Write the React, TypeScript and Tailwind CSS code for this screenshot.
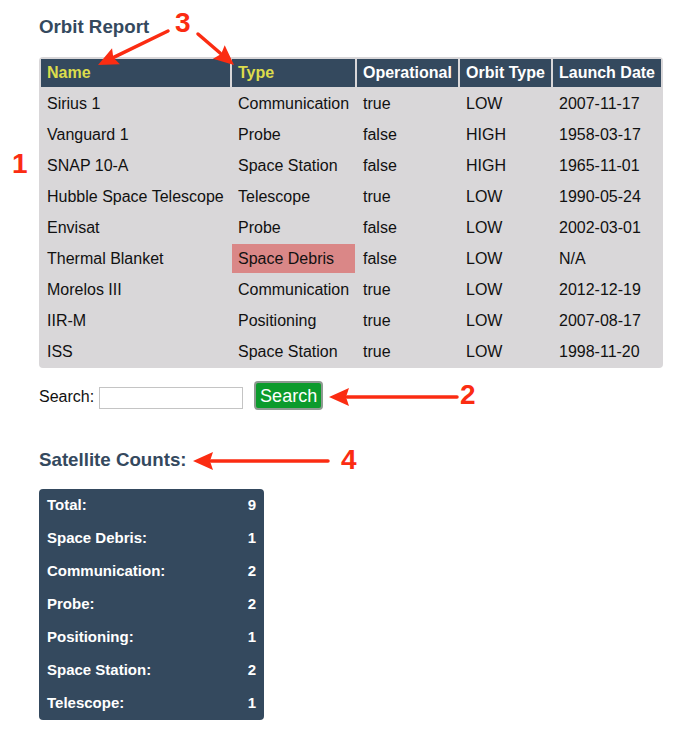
import React from "react";

const RED = "#fb2c12";

type Row = { name: string; type: string; op: string; orbit: string; date: string; hl?: boolean };

const rows: Row[] = [
  { name: "Sirius 1", type: "Communication", op: "true", orbit: "LOW", date: "2007-11-17" },
  { name: "Vanguard 1", type: "Probe", op: "false", orbit: "HIGH", date: "1958-03-17" },
  { name: "SNAP 10-A", type: "Space Station", op: "false", orbit: "HIGH", date: "1965-11-01" },
  { name: "Hubble Space Telescope", type: "Telescope", op: "true", orbit: "LOW", date: "1990-05-24" },
  { name: "Envisat", type: "Probe", op: "false", orbit: "LOW", date: "2002-03-01" },
  { name: "Thermal Blanket", type: "Space Debris", op: "false", orbit: "LOW", date: "N/A", hl: true },
  { name: "Morelos III", type: "Communication", op: "true", orbit: "LOW", date: "2012-12-19" },
  { name: "IIR-M", type: "Positioning", op: "true", orbit: "LOW", date: "2007-08-17" },
  { name: "ISS", type: "Space Station", op: "true", orbit: "LOW", date: "1998-11-20" },
];

const counts: [string, number][] = [
  ["Total:", 9],
  ["Space Debris:", 1],
  ["Communication:", 2],
  ["Probe:", 2],
  ["Positioning:", 1],
  ["Space Station:", 2],
  ["Telescope:", 1],
];

function Arrow({ x1, y1, x2, y2 }: { x1: number; y1: number; x2: number; y2: number }) {
  const dx = x2 - x1;
  const dy = y2 - y1;
  const len = Math.hypot(dx, dy);
  const ux = dx / len;
  const uy = dy / len;
  const hl = 20;
  const hw = 9;
  const bx = x2 - ux * hl;
  const by = y2 - uy * hl;
  const px = -uy;
  const py = ux;
  const pts = `${x2},${y2} ${bx + px * hw},${by + py * hw} ${bx + ux * 3},${by + uy * 3} ${bx - px * hw},${by - py * hw}`;
  return (
    <g>
      <line x1={x1} y1={y1} x2={bx + ux * 2} y2={by + uy * 2} stroke={RED} strokeWidth={3.5} strokeLinecap="round" />
      <polygon points={pts} fill={RED} />
    </g>
  );
}

function Num({ children, className }: { children: React.ReactNode; className: string }) {
  return (
    <div
      className={`absolute text-[28px] font-bold leading-[28px] text-[#fb2c12] ${className}`}
      style={{ fontFamily: '"Liberation Sans", Arial, sans-serif' }}
    >
      {children}
    </div>
  );
}

export default function App() {
  return (
    <div
      className="relative w-[676px] h-[737px] bg-white overflow-hidden"
      style={{ fontFamily: '"Liberation Sans", Arial, Helvetica, sans-serif' }}
    >
      <div className="pl-[39px] flex flex-col">
        <div className="mt-[16px] h-[22px] text-[18.72px] leading-[22px] font-bold text-[#34495e]">Orbit Report</div>

        <table className="mt-[19px] w-[624px] table-fixed border-separate border-spacing-[2px] bg-[#d9d7d9] rounded-[4px] text-[16px] text-[#111]">
          <thead>
            <tr className="h-[28px]">
              <th className="w-[189px] bg-[#34495e] text-left px-[6px] py-0 font-bold text-[#dcdc4c]">Name</th>
              <th className="w-[123px] bg-[#34495e] text-left px-[6px] py-0 font-bold text-[#dcdc4c]">Type</th>
              <th className="w-[101px] bg-[#34495e] text-left px-[6px] py-0 font-bold text-white">Operational</th>
              <th className="w-[91px] bg-[#34495e] text-left px-[6px] py-0 font-bold text-white">Orbit Type</th>
              <th className="w-[108px] bg-[#34495e] text-left px-[6px] py-0 font-bold text-white">Launch Date</th>
            </tr>
          </thead>
          <tbody>
            {rows.map((r) => (
              <tr key={r.name} className="h-[29px]">
                <td className="px-[6px] py-0 whitespace-nowrap">{r.name}</td>
                <td className={`px-[6px] py-0 whitespace-nowrap ${r.hl ? "bg-[#da8787]" : ""}`}>{r.type}</td>
                <td className="px-[6px] py-0">{r.op}</td>
                <td className="px-[6px] py-0">{r.orbit}</td>
                <td className="px-[6px] py-0">{r.date}</td>
              </tr>
            ))}
          </tbody>
        </table>

        <div className="mt-[13px] h-[29px] flex items-center text-[16px] text-[#111]">
          <span className="mt-[3px]">Search:</span>
          <input
            type="text"
            className="ml-[5px] w-[144px] h-[22px] mt-[4px] border border-[#c4c4c4] bg-white outline-none"
          />
          <button className="ml-[11px] w-[69px] h-[29px] bg-[#0c9b2c] border-2 border-[#8f9a92] rounded-[4px] text-white text-[18px] leading-none">
            Search
          </button>
        </div>

        <div className="mt-[39px] h-[22px] text-[18.72px] leading-[22px] font-bold text-[#34495e]">Satellite Counts:</div>

        <div className="mt-[18px] w-[225px] bg-[#34495e] rounded-[4px] flex flex-col text-white text-[15px] font-bold">
          {counts.map(([k, v]) => (
            <div key={k} className="h-[33px] px-[8px] flex items-center justify-between">
              <span>{k}</span>
              <span>{v}</span>
            </div>
          ))}
        </div>
      </div>

      <svg className="absolute inset-0 pointer-events-none" width={676} height={737} viewBox="0 0 676 737">
        <Arrow x1={168} y1={31} x2={98} y2={65} />
        <Arrow x1={198} y1={34} x2={234} y2={65} />
        <Arrow x1={457} y1={397} x2={329} y2={397} />
        <Arrow x1={328} y1={461} x2={193} y2={461} />
      </svg>

      <Num className="left-[12px] top-[150px]">1</Num>
      <Num className="left-[460px] top-[381px]">2</Num>
      <Num className="left-[175px] top-[9px]">3</Num>
      <Num className="left-[341px] top-[446px]">4</Num>
    </div>
  );
}
